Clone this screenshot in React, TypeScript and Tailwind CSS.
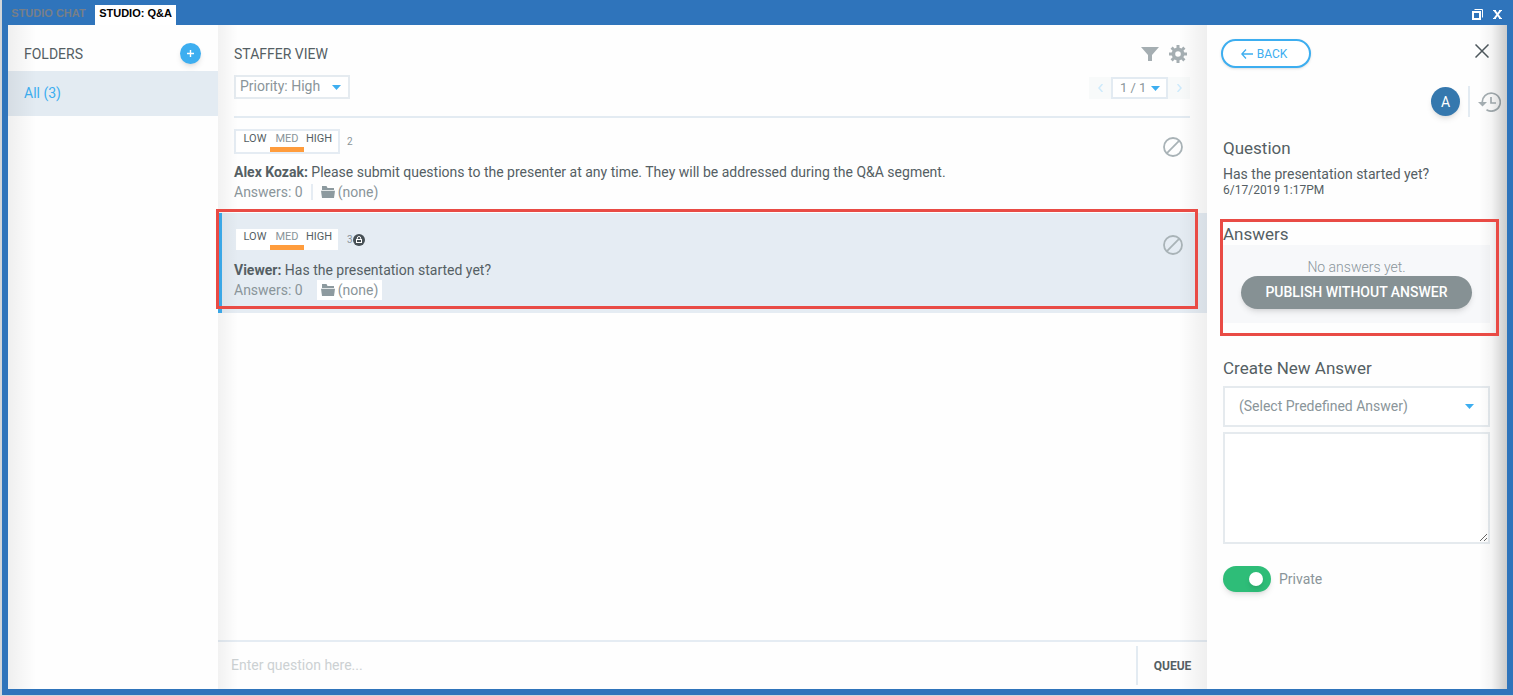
import React, { useState } from 'react';

const questions = [
  { id: 2, author: 'Alex Kozak', text: 'Please submit questions to the presenter at any time. They will be addressed during the Q&A segment.', selected: false },
  { id: 3, author: 'Viewer', text: 'Has the presentation started yet?', selected: true },
];

function Caret({ className = '' }: { className?: string }) {
  return (
    <svg width="9" height="5" viewBox="0 0 9 5" className={`pointer-events-none absolute ${className}`} aria-hidden="true">
      <path d="M0 0h9L4.500 5z" fill="#3daef0" />
    </svg>
  );
}

function FolderIcon() {
  return (
    <svg width="14" height="12" viewBox="0 0 14 12" fill="#8d9a9f" aria-hidden="true">
      <path d="M1 0h4.500l1 2H13v2H1z" />
      <path d="M0 4.700h14L13 12H1z" />
    </svg>
  );
}

function BanIcon() {
  return (
    <svg width="20" height="20" viewBox="0 0 20 20" fill="none" stroke="#a9b3b7" strokeWidth="1.800" aria-hidden="true">
      <circle cx="10" cy="10" r="9" />
      <path d="M3.700 16.300L16.300 3.700" />
    </svg>
  );
}

function LockBadge() {
  return (
    <svg width="12" height="12" viewBox="0 0 12 12" aria-hidden="true">
      <circle cx="6" cy="6" r="6" fill="#475055" />
      <path d="M4.300 5.500V4.200a1.700 1.700 0 0 1 3.400 0v1.300" fill="none" stroke="#fff" />
      <rect x="3" y="5" width="6" height="4" fill="#fff" />
      <rect x="4" y="6" width="4" height="2" fill="#475055" />
    </svg>
  );
}

function TitleBar() {
  return (
    <header className="flex h-[25px] justify-between pl-1 font-['Liberation_Sans',Arial,sans-serif] text-[11px] font-bold">
      <nav className="flex items-end">
        <button className="h-5 w-[89px] pr-1 pb-1 text-[#777f88]">STUDIO CHAT</button>
        <button className="h-5 w-[81px] bg-white pb-1 text-black">STUDIO: Q&amp;A</button>
      </nav>
      <div className="flex items-center gap-2.5 pt-1 pr-[11px]">
        <button aria-label="Restore window">
          <svg width="11" height="11" viewBox="0 0 11 11" fill="none" stroke="#fff">
            <path d="M2.500 .5h8V8.500" />
            <path d="M1 3h7v7H1z" strokeWidth="2" />
          </svg>
        </button>
        <button aria-label="Close window">
          <svg width="9" height="9" viewBox="0 0 9 9" stroke="#fff">
            <path d="M1.500 0.500l6 8M7.500 0.500l-6 8" strokeWidth="2" />
            <path d="M0 .5h3M6 .5h3M0 8.500h3M6 8.500h3" />
          </svg>
        </button>
      </div>
    </header>
  );
}

function Folders() {
  return (
    <aside className="relative w-[210px] shrink-0 bg-[#fefefe]">
      <div className="flex h-[46px] items-center justify-between pt-[11px] pr-[17px] pl-4">
        <h2 className="text-sm">FOLDERS</h2>
        <button aria-label="Add folder" className="flex size-[21px] items-center justify-center rounded-full bg-[#3daef0] shadow-md">
          <svg width="7" height="7" viewBox="0 0 7 7" stroke="#fff" strokeWidth="1.400">
            <path d="M3.500 0v7M0 3.500h7" />
          </svg>
        </button>
      </div>
      <a href="#all" className="flex h-[45px] items-center bg-[#e3ebf2] px-4 pb-px text-sm text-[#3daef0]">All (3)</a>
      <div className="pointer-events-none absolute inset-y-0 left-0 w-7 bg-linear-to-r from-black/6 to-transparent" />
    </aside>
  );
}

function Toolbar() {
  return (
    <div className="mr-[17px] ml-4 flex h-[93px] items-start justify-between border-b-2 border-[#e3ebf2]">
      <div>
        <h1 className="mt-[19px] text-sm">STAFFER VIEW</h1>
        <div className="relative mt-[11px] w-[116px]">
          <select aria-label="Priority filter" className="block h-6 w-full appearance-none border-2 border-[#e5ebf0] bg-white pb-0.5 pl-1 text-sm leading-4 text-[#8a959a]">
            <option>Priority: High</option>
          </select>
          <Caret className="top-2.5 right-[9px]" />
        </div>
      </div>
      <div className="flex flex-col items-end">
        <div className="mt-5 mr-[3px] flex items-center gap-2.5">
          <button aria-label="Filter">
            <svg width="18" height="14" viewBox="0 0 18 14" fill="#a5aeb2">
              <path d="M0 0h18l-7 8v6H7V8z" />
            </svg>
          </button>
          <button aria-label="Settings">
            <svg width="18" height="18" viewBox="0 0 18 18" fill="none" stroke="#a5aeb2">
              <circle cx="9" cy="9" r="4.600" strokeWidth="3.600" />
              <path d="M9 0v4M9 14v4M0 9h4M14 9h4M2.600 2.600l2.900 2.900M12.500 12.500l2.900 2.900M2.600 15.400l2.900-2.900M12.500 5.500l2.900-2.900" strokeWidth="3" />
            </svg>
          </button>
        </div>
        <div className="mt-3.5 flex h-[22px]">
          <button aria-label="Previous page" className="flex w-[22px] items-center justify-center bg-[#f8fafa]">
            <svg width="5" height="8" viewBox="0 0 5 8" fill="none" stroke="#cdeafb" strokeWidth="1.500"><path d="M4.500 0L1 4l3.500 4" /></svg>
          </button>
          <div className="relative w-[57px]">
            <select aria-label="Page" className="block h-[22px] w-full appearance-none border-2 border-[#e3ebf2] bg-white pl-[7px] text-[13px] leading-4 text-[#8a959a]">
              <option>1 / 1</option>
            </select>
            <Caret className="top-[9px] right-2" />
          </div>
          <button aria-label="Next page" className="flex w-[22px] items-center justify-center bg-[#f8fafa]">
            <svg width="5" height="8" viewBox="0 0 5 8" fill="none" stroke="#cdeafb" strokeWidth="1.500"><path d="M.5 0L4 4 .5 8" /></svg>
          </button>
        </div>
      </div>
    </div>
  );
}

function QuestionRow({ q }: { q: (typeof questions)[number] }) {
  return (
    <li className={q.selected ? 'relative h-[100px] border-l-4 border-[#3daef0] bg-[#e5ecf3] pt-3.5 pr-6 pl-3' : 'relative h-[95px] pt-[11px] pr-6 pl-4'}>
      <div className="flex items-start justify-between">
        <div className="flex">
          <div className="flex h-[25px] items-start border-2 border-[#e5ecf3] bg-white text-[11px] leading-4 text-[#555f64]">
            <button className="h-[21px] w-[34px] border-b-5 border-transparent pl-1">LOW</button>
            <button className="h-[21px] w-[34px] border-b-5 border-[#ff9c3c] text-[#8a959a]">MED</button>
            <button className="h-[21px] w-[34px] border-b-5 border-transparent pr-1">HIGH</button>
          </div>
          <div className="flex items-center pl-[7px] text-[10px] text-[#8a959a]">
            {q.id}
            {q.selected && <LockBadge />}
          </div>
        </div>
        <button aria-label="Dismiss question" className="mt-2"><BanIcon /></button>
      </div>
      <p className="mt-[5px] text-sm leading-5"><b>{q.author}:</b> {q.text}</p>
      <div className="flex h-5 items-center text-sm leading-5 text-[#8a959a]">
        <span className={q.selected ? 'pr-2' : 'border-r-2 border-[#e5ecf3] pr-2 leading-4'}>Answers: 0</span>
        <button className={q.selected ? 'ml-1.5 flex items-center gap-[3px] bg-white px-1' : 'ml-1 flex items-center gap-[3px] px-1'}>
          <FolderIcon />
          (none)
        </button>
      </div>
      {q.selected && <div className="pointer-events-none absolute -top-1 right-[9px] bottom-1 -left-1.5 z-10 border-3 border-[#e94b45]" />}
    </li>
  );
}

function StafferView() {
  return (
    <main className="relative flex min-w-0 flex-1 flex-col bg-[#fefefe]">
      <Toolbar />
      <ul className="flex-1">
        {questions.map((q) => <QuestionRow key={q.id} q={q} />)}
      </ul>
      <form className="flex h-[49px] border-t-2 border-[#e5ecf3]">
        <input aria-label="Enter question" placeholder="Enter question here..." className="min-w-0 flex-1 px-[13px] pb-px text-sm outline-none placeholder:text-[#ccd1d3]" />
        <button type="button" className="my-1 w-[71px] border-l-2 border-[#e3ebf2] text-xs font-bold">QUEUE</button>
      </form>
      <div className="pointer-events-none absolute inset-y-0 left-0 w-5 bg-linear-to-r from-black/5 to-transparent" />
      <div className="pointer-events-none absolute inset-y-0 right-0 w-7 bg-linear-to-l from-black/6 to-transparent" />
    </main>
  );
}

function Details() {
  const [isPrivate, setIsPrivate] = useState(true);

  return (
    <aside className="relative w-[300px] shrink-0 bg-[#fefefe] pr-[17px] pl-4">
      <div className="-ml-0.5 flex items-start justify-between pt-3.5">
        <button className="flex h-[29px] w-[90px] items-center justify-center gap-1 rounded-full border-2 border-[#3daef0] bg-white pr-1 text-xs text-[#3daef0] shadow-sm">
          <svg width="12" height="10" viewBox="0 0 12 10" fill="none" stroke="currentColor" strokeWidth="1.300"><path d="M5 .5L.8 5 5 9.500M1 5h11" /></svg>
          BACK
        </button>
        <button aria-label="Close" className="mt-[5px] mr-px">
          <svg width="14" height="14" viewBox="0 0 14 14" stroke="#4d575c" strokeWidth="1.500"><path d="M.5.5l13 13M13.500.5l-13 13" /></svg>
        </button>
      </div>
      <div className="-mr-[11px] mt-[18px] flex h-[31px] items-center justify-end">
        <span className="flex size-[29px] items-center justify-center rounded-full bg-[#3578ae] text-sm text-white shadow-md">A</span>
        <span className="mr-2 ml-2 h-full w-0.5 bg-[#e3ebf2]" />
        <button aria-label="History">
          <svg width="23" height="20" viewBox="0 0 23 20" fill="none" stroke="#a5aeb2" strokeWidth="1.700">
            <path d="M4.300 11A9 9 0 1 1 8.500 17.800" />
            <path d="M13 5v6h5" />
            <path d="M0 10h9l-4.500 4.500z" fill="#a5aeb2" stroke="none" />
          </svg>
        </button>
      </div>
      <h2 className="mt-[21px] text-[17px] leading-5">Question</h2>
      <p className="mt-1.5 text-sm leading-5">Has the presentation started yet?</p>
      <p className="text-xs leading-3">6/17/2019 1:17PM</p>
      <section className="relative mt-7">
        <h2 className="text-[17px] leading-5">Answers</h2>
        <div className="mt-px flex h-[78px] flex-col items-center bg-[#f7f8fa] pt-3">
          <p className="text-sm leading-5 font-light text-[#8a959a]">No answers yet.</p>
          <button className="-mt-px h-[33px] w-[231px] shrink-0 rounded-full bg-[#869194] pb-px text-sm font-medium text-white shadow-md">PUBLISH WITHOUT ANSWER</button>
        </div>
        <div className="pointer-events-none absolute -top-[5px] -right-[9px] -bottom-[13px] -left-[3px] z-10 border-3 border-[#e94b45]" />
      </section>
      <h2 className="mt-[35px] text-[17px] leading-5">Create New Answer</h2>
      <div className="relative mt-2">
        <select aria-label="Predefined answer" className="block h-[41px] w-full appearance-none border-2 border-[#e5eaee] bg-white pb-px pl-3.5 text-sm text-[#8a959a]">
          <option>(Select Predefined Answer)</option>
        </select>
        <Caret className="top-[18px] right-4" />
      </div>
      <textarea aria-label="New answer" className="mt-[5px] block h-28 w-full resize-y border-2 border-[#e5eaee] bg-white" />
      <label className="mt-[22px] flex w-fit items-center gap-2 text-sm text-[#8a959a]">
        <span className="relative flex">
          <input type="checkbox" role="switch" checked={isPrivate} onChange={(e) => setIsPrivate(e.target.checked)} className="peer h-[26px] w-12 appearance-none rounded-full bg-[#b5bdc0] shadow-md checked:bg-[#2ebd78]" />
          <span className="pointer-events-none absolute top-1.5 left-2 size-3.5 rounded-full bg-white shadow-md peer-checked:left-[26px]" />
        </span>
        Private
      </label>
      <div className="pointer-events-none absolute inset-y-0 right-0 w-7 bg-linear-to-l from-black/20 via-black/4 via-55% to-transparent" />
    </aside>
  );
}

export default function App() {
  return (
    <div className="flex min-h-screen flex-col border-b border-l-2 border-[#d2d6da] font-['Roboto',sans-serif] text-[#555f64]">
      <div className="flex flex-1 flex-col bg-[#2f74bb]">
        <TitleBar />
        <div className="flex flex-1 border-x-6 border-b-6 border-[#2f74bb]">
          <Folders />
          <StafferView />
          <Details />
        </div>
      </div>
    </div>
  );
}
